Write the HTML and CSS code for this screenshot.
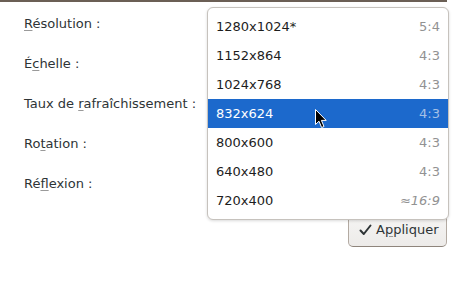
FILE: index.html
```html
<!DOCTYPE html>
<html lang="fr">
<head>
    <meta charset="UTF-8">
    <meta name="viewport" content="width=device-width, initial-scale=1.0">
    <title>Affichage</title>
    <link rel="stylesheet" href="styles.css">
</head>
<body>
    <div class="window">
        <div class="header-edge"></div>

        <div class="settings">
            <div class="label"><u>R</u>ésolution :</div>
            <div class="label">É<u>c</u>helle :</div>
            <div class="label">Taux de <u>r</u>afraîchissement :</div>
            <div class="label">Ro<u>t</u>ation :</div>
            <div class="label">Ré<u>f</u>lexion :</div>
        </div>

        <div class="actions">
            <button class="apply-btn">
                <svg class="check" width="13" height="12" viewBox="0 0 13 12">
                    <path d="M1.5 6.5 L4.8 10 L11.5 1.5" fill="none" stroke="#2e3436" stroke-width="2" stroke-linecap="round" stroke-linejoin="round"/>
                </svg>
                <span>A<u>p</u>pliquer</span>
            </button>
        </div>

        <ul class="mode-menu">
            <li><span>1280x1024*</span><span class="ratio">5:4</span></li>
            <li><span>1152x864</span><span class="ratio">4:3</span></li>
            <li><span>1024x768</span><span class="ratio">4:3</span></li>
            <li class="selected"><span>832x624</span><span class="ratio">4:3</span></li>
            <li><span>800x600</span><span class="ratio">4:3</span></li>
            <li><span>640x480</span><span class="ratio">4:3</span></li>
            <li><span>720x400</span><span class="ratio approx">≈16:9</span></li>
        </ul>

        <svg class="pointer" width="13" height="20" viewBox="0 0 13 20">
            <path d="M0.5 0.5 L0.5 15.5 L4 12.2 L6.6 18.5 L9 17.5 L6.4 11.4 L11.2 11.4 Z" fill="#000" stroke="#fff" stroke-width="1" stroke-linejoin="round"/>
        </svg>
    </div>
</body>
</html>
```

FILE: styles.css
```css
body {
    margin: 0;
    padding: 0;
    background-color: #fff;
    font-family: 'DejaVu Sans', sans-serif;
    font-size: 13px;
    color: #2e3436;
}

.window {
    position: relative;
    width: 462px;
    height: 308px;
}

.header-edge {
    width: 447px;
    height: 2px;
    background-color: #6b5f55;
}

u {
    text-decoration: underline;
    text-decoration-color: #9a9a9a;
    text-underline-offset: 2px;
}

.settings {
    padding: 2px 0 0 24px;
}

.label {
    height: 40px;
    line-height: 40px;
}

.actions {
    display: flex;
    justify-content: flex-end;
    width: 447px;
    margin-top: 8px;
}

.apply-btn {
    display: flex;
    align-items: center;
    gap: 4px;
    width: 99px;
    height: 35px;
    padding: 0 0 0 10px;
    font-family: inherit;
    font-size: 13px;
    color: #2e3436;
    background: linear-gradient(#f6f5f4, #edebe9);
    border: 1px solid #b3aaa2;
    border-bottom-color: #8f857c;
    border-radius: 5px;
}

.check {
    flex-shrink: 0;
}

.mode-menu {
    position: absolute;
    left: 207px;
    top: 7px;
    width: 240px;
    margin: 0;
    padding: 4px 0;
    list-style: none;
    background-color: #fff;
    border: 1px solid #c6c2bd;
    border-radius: 6px;
    box-shadow: 0 1px 3px rgba(0, 0, 0, 0.15);
}

.mode-menu li {
    display: flex;
    justify-content: space-between;
    align-items: center;
    height: 29px;
    padding: 0 8px;
    color: #1d1d1d;
}

.mode-menu .ratio {
    color: #929292;
}

.mode-menu .approx {
    font-style: italic;
}

.mode-menu li.selected {
    background-color: #1c69cc;
    color: #fff;
}

.mode-menu li.selected .ratio {
    color: #a5c0e6;
}

.pointer {
    position: absolute;
    left: 315px;
    top: 109px;
}
```
